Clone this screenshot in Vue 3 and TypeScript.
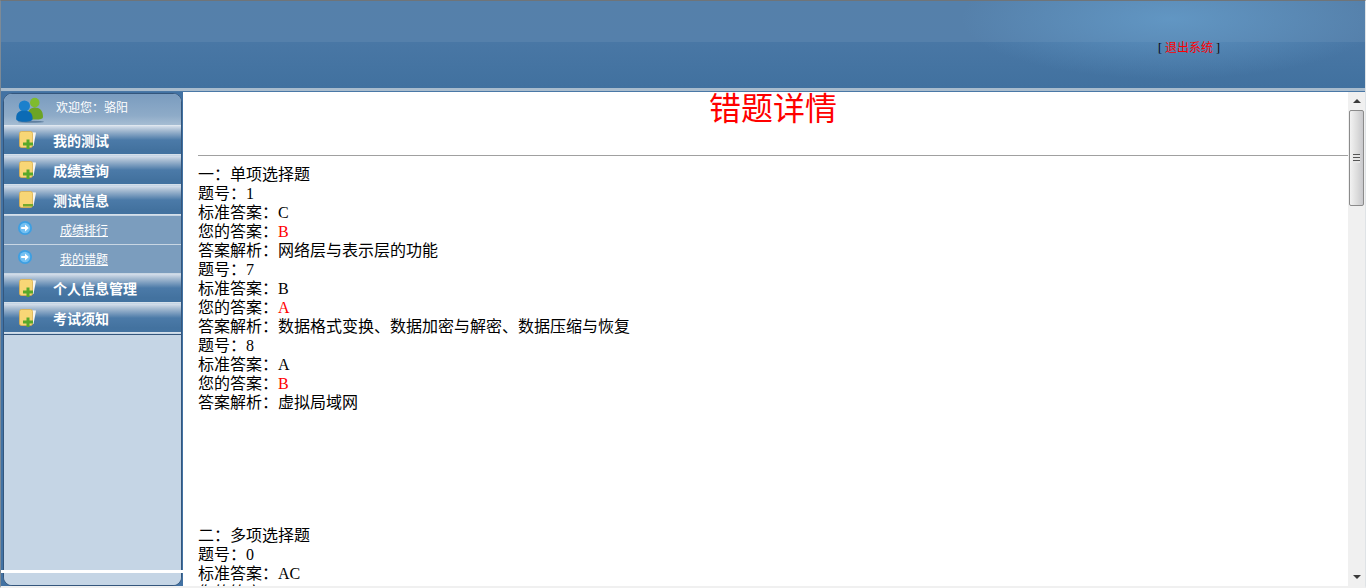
<script setup lang="ts">
interface Answer { no: string; right: string; mine: string; note?: string }
interface Section { title: string; answers: Answer[] }

const menus = [
  { name: '我的测试', icon: 'plus' },
  { name: '成绩查询', icon: 'plus' },
  { name: '测试信息', icon: 'minus', subs: ['成绩排行', '我的错题'] },
  { name: '个人信息管理', icon: 'plus' },
  { name: '考试须知', icon: 'plus' },
]

const sections: Section[] = [
  {
    title: '一：单项选择题',
    answers: [
      { no: '1', right: 'C', mine: 'B', note: '网络层与表示层的功能' },
      { no: '7', right: 'B', mine: 'A', note: '数据格式变换、数据加密与解密、数据压缩与恢复' },
      { no: '8', right: 'A', mine: 'B', note: '虚拟局域网' },
    ],
  },
  {
    title: '二：多项选择题',
    answers: [{ no: '0', right: 'AC', mine: 'AB' }],
  },
]
</script>

<template>
  <div class="page">
    <header class="top">
      <div class="logout">[ <a class="logout-link">退出系统</a> ]</div>
    </header>
    <div class="strip"></div>

    <div class="main">
      <aside class="side">
        <div class="panel">
          <div class="welcome">
            <svg class="users" width="28" height="26" viewBox="0 0 32 30">
              <ellipse cx="17" cy="28.5" rx="15" ry="1.2" fill="#5f7f9f" />
              <circle cx="21.500" cy="6.500" r="5.500" fill="#7fbb2e" />
              <path d="M13 24c0-8 3-12 8.500-12S31 15 31 23c0 2-3 3-9 3-5 0-9 0-9-2z" fill="#6ca424" />
              <circle cx="9.500" cy="10.500" r="6.500" fill="#1b80cc" />
              <path d="M0 25c0-7 3-9 9.500-9S19 19 19 25c0 2-3 3.500-9.500 3.500S0 27 0 25z" fill="#0c6bb5" />
            </svg>
            <span>欢迎您：骆阳</span>
          </div>

          <template v-for="menu in menus" :key="menu.name">
            <div class="menu">
              <svg class="folder" width="18" height="19" viewBox="0 0 18 19">
                <path d="M10 1l7 .5L14.500 15H10z" fill="#f6f6ee" />
                <rect x=".5" y=".5" width="13" height="16" rx="2" fill="#f8d676" stroke="#dcae4c" stroke-width=".8" />
                <path v-if="menu.icon === 'plus'" d="M7.500 8.500h3v3h3.500v3h-3.500V18h-3v-3.500H4v-3h3.500z" fill="#58a82a" />
                <rect v-else x="4" y="13" width="10" height="2.500" fill="#74a92e" />
              </svg>
              <span>{{ menu.name }}</span>
            </div>
            <div v-for="sub in menu.subs" :key="sub" class="sub">
              <svg class="arrow" width="14" height="14" viewBox="0 0 14 14">
                <circle cx="7" cy="7" r="7" fill="#3d9fe2" />
                <circle cx="7" cy="7" r="5.200" fill="#74c0f2" />
                <path d="M3.200 6h3.800V3.500L10.800 7 7 10.500V8H3.200z" fill="#fff" />
              </svg>
              <a class="sub-link">{{ sub }}</a>
            </div>
          </template>

          <div class="panel-rest"></div>
        </div>
        <div class="white-line"></div>
      </aside>

      <main class="content">
        <h1 class="title">错题详情</h1>
        <hr class="rule" />
        <section v-for="section in sections" :key="section.title" class="block">
          <div>{{ section.title }}</div>
          <template v-for="item in section.answers" :key="item.no">
            <div>题号：{{ item.no }}</div>
            <div>标准答案：{{ item.right }}</div>
            <div>您的答案：<span class="wrong">{{ item.mine }}</span></div>
            <div v-if="item.note">答案解析：{{ item.note }}</div>
          </template>
        </section>
      </main>

      <div class="scrollbar">
        <div class="scroll-btn"><i class="tri up"></i></div>
        <div class="thumb">
          <div class="grip"></div>
        </div>
        <div class="track"></div>
        <div class="scroll-btn"><i class="tri down"></i></div>
      </div>
    </div>
  </div>
</template>

<style>
html, body { margin: 0; height: 100%; overflow: hidden; background: #fff; }
</style>

<style scoped>
.page {
  height: 588px; box-sizing: border-box; display: flex; flex-direction: column;
  border-top: 1px solid #6f7478; border-left: 1px solid #7d8a96; border-right: 1px solid #dfe3e6;
  border-bottom: 2px solid #f0f0f0;
  font-family: "Liberation Serif", "Noto Sans CJK SC", serif;
}
.top {
  height: 87px; flex: none; position: relative;
  background:
    radial-gradient(ellipse 210px 60px at 1170px 18px, rgba(104, 162, 208, .65), rgba(104, 162, 208, 0)),
    linear-gradient(to bottom, #5580aa 0, #5580ab 41px, #4977a5 41px, #41719f 100%);
}
.logout {
  position: absolute; left: 1157px; top: 39px;
  font-size: 12px; line-height: 16px; color: #000;
}
.logout-link { color: #f00; }
.strip { height: 3px; flex: none; background: #a9bccd; border-bottom: 1px solid #4a78a6; }

.main { flex: 1; display: flex; min-height: 0; }
.side { width: 182px; flex: none; position: relative; background: #4272a3; padding: 1px 0 0 2px; box-sizing: border-box; }
.panel {
  height: 100%; width: 179px; box-sizing: border-box; display: flex; flex-direction: column;
  border: 1px solid #34567c; border-radius: 9px;
  overflow: hidden; background: #c5d5e5;
}
.welcome {
  height: 32px; flex: none; display: flex; align-items: center; gap: 12px; padding: 0 0 5px 12px;
  box-sizing: border-box; font-size: 12px; color: #fff;
  background: linear-gradient(to bottom, #7a9cbf, #8eabc8 70%, #a6bdd3);
  border-bottom: 1px solid #dfe7ef;
}
.users { margin-top: 5px; }
.menu {
  height: 29px; flex: none; display: flex; align-items: center; padding-left: 15px; gap: 16px;
  font-size: 14px; font-weight: 700; color: #fff;
  background: linear-gradient(to bottom, #d5dfeb 0, #a8bdd3 15%, #4b7aa8 50%, #43729f 85%, #4272a0 100%);
  border-bottom: 1px solid #d5e0ea;
  box-sizing: border-box; margin-bottom: 1px;
}
.sub {
  height: 29px; flex: none; display: flex; align-items: center; padding: 0 0 3px 14px; gap: 28px;
  box-sizing: border-box; background: #7b9dbe; border-bottom: 1px solid #c8d6e3;
  font-size: 12px; color: #fff;
}
.sub:last-of-type { margin-bottom: 3px; }
.arrow { margin-top: -2px; }
.sub-link { text-decoration: underline; margin-top: 3px; }
.panel-rest { flex: 1; background: #c5d5e5; border-top: 1px solid #34567c; }
.white-line {
  position: absolute; left: 0; right: 0; bottom: 13px; height: 3px; background: #fff;
}

.content { flex: 1; min-width: 0; overflow: hidden; padding: 1px 0 0 15px; font-size: 16px; line-height: 19px; color: #000; }
.title { margin: 0; height: 32px; font-size: 32px; line-height: 32px; font-weight: 400; color: #f00; text-align: center; }
.rule { margin: 30px 0 9px; border: 0; border-top: 1px solid #a0a0a0; }
.block { margin-bottom: 114px; }
.wrong { color: #f00; }

.scrollbar { width: 17px; flex: none; display: flex; flex-direction: column; background: #f0f0f0; }
.scroll-btn { height: 18px; flex: none; display: flex; align-items: center; justify-content: center; }
.tri { width: 0; height: 0; border-left: 4px solid transparent; border-right: 4px solid transparent; }
.tri.up { border-bottom: 4px solid #3a3a3a; }
.tri.down { border-top: 4px solid #3a3a3a; }
.thumb {
  height: 96px; flex: none; width: 15px; margin-left: 1px; box-sizing: border-box;
  display: flex; align-items: center; justify-content: center;
  border: 1px solid #8b8b8b; border-radius: 2px;
  background: linear-gradient(to right, #f2f2f2, #dcdcdc 55%, #c8c8cc);
}
.grip {
  width: 7px; height: 9px;
  background: repeating-linear-gradient(to bottom, #555 0, #555 1px, #e6e6e6 1px, #e6e6e6 3px);
}
.track { flex: 1; }
</style>
